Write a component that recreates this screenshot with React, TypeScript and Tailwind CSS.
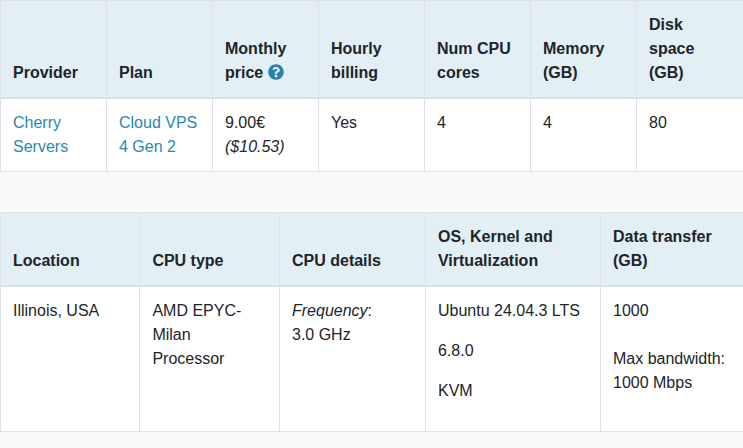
const th = "border border-b-2 border-[#dee2e6] px-3 py-3 text-left align-bottom font-bold";
const td = "border border-[#dee2e6] px-3 py-3 text-left align-top font-normal";
const link = "text-[#2a87b2]";

function HelpIcon() {
  return (
    <svg
      viewBox="0 0 512 512"
      className="inline-block h-4 w-4 align-[-2px] fill-[#2980a8]"
      aria-hidden="true"
    >
      <path d="M504 256c0 137-111 248-248 248S8 393 8 256 119 8 256 8s248 111 248 248zM262.700 90c-54.500 0-89.300 23-116.500 63.800-3.500 5.300-2.400 12.400 2.700 16.300l34.700 26.300c5.200 3.900 12.600 3 16.700-2.100 17.900-22.700 30.100-35.800 57.300-35.800 20.400 0 45.700 13.100 45.700 32.900 0 15-12.400 22.700-32.500 34-23.500 13.200-54.600 29.600-54.600 70.600V302c0 6.600 5.400 12 12 12h56c6.600 0 12-5.400 12-12v-1.300c0-28.400 83-29.600 83-106.700 0-58-60.200-102-116.500-102zM256 338c-25.400 0-46 20.600-46 46 0 25.400 20.600 46 46 46s46-20.600 46-46c0-25.400-20.600-46-46-46z" />
    </svg>
  );
}

export default function App() {
  return (
    <div className="h-[448px] overflow-hidden bg-[#f9f9f9] font-['Liberation_Sans',Arial,sans-serif] text-base leading-6 text-[#212529]">
      <table className="w-[743px] table-fixed border-collapse bg-white">
        <colgroup>
          <col className="w-[106px]" />
          <col className="w-[106px]" />
          <col className="w-[106px]" />
          <col className="w-[106px]" />
          <col className="w-[106px]" />
          <col className="w-[106px]" />
          <col className="w-[107px]" />
        </colgroup>
        <thead className="bg-[#e2eff5]">
          <tr>
            <th className={th}>Provider</th>
            <th className={th}>Plan</th>
            <th className={th}>
              Monthly price <HelpIcon />
            </th>
            <th className={th}>Hourly billing</th>
            <th className={th}>Num CPU cores</th>
            <th className={th}>Memory (GB)</th>
            <th className={th}>Disk space (GB)</th>
          </tr>
        </thead>
        <tbody>
          <tr>
            <td className={td}>
              <a className={link}>Cherry Servers</a>
            </td>
            <td className={td}>
              <a className={link}>Cloud VPS 4 Gen 2</a>
            </td>
            <td className={td}>
              9.00€ <em>($10.53)</em>
            </td>
            <td className={td}>Yes</td>
            <td className={td}>4</td>
            <td className={td}>4</td>
            <td className={td}>80</td>
          </tr>
        </tbody>
      </table>

      <table className="mt-10 w-[743px] table-fixed border-collapse bg-white">
        <colgroup>
          <col className="w-[139.4px]" />
          <col className="w-[139.6px]" />
          <col className="w-[146px]" />
          <col className="w-[175px]" />
          <col className="w-[143px]" />
        </colgroup>
        <thead className="bg-[#e2eff5]">
          <tr>
            <th className={th}>Location</th>
            <th className={th}>CPU type</th>
            <th className={th}>CPU details</th>
            <th className={th}>OS, Kernel and Virtualization</th>
            <th className={th}>Data transfer (GB)</th>
          </tr>
        </thead>
        <tbody>
          <tr>
            <td className={td}>Illinois, USA</td>
            <td className={td}>
              AMD EPYC-Milan
              <br />
              Processor
            </td>
            <td className={td}>
              <em>Frequency</em>: 3.0&nbsp;GHz
            </td>
            <td className={td}>
              <p className="mb-4">Ubuntu 24.04.3 LTS</p>
              <p className="mb-4">6.8.0</p>
              <p className="mb-4">KVM</p>
            </td>
            <td className={td}>
              <p>1000</p>
              <p className="mt-6">Max bandwidth: 1000 Mbps</p>
            </td>
          </tr>
        </tbody>
      </table>
    </div>
  );
}
